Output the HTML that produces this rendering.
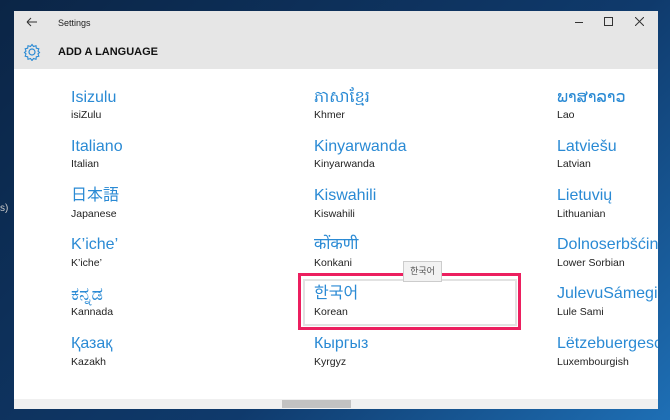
<!DOCTYPE html><html><head><meta charset="utf-8"><style>
body{margin:0;width:670px;height:420px;overflow:hidden;background:linear-gradient(135deg,#0b2546 0%,#0f3a6c 60%,#1e6fb5 100%);font-family:"Liberation Sans","Noto Sans CJK KR",sans-serif;position:relative}
.win{position:absolute;left:14px;top:11px;width:644px;height:398px;background:#fff;overflow:hidden}
.hd{position:absolute;left:0;top:0;width:644px;height:58px;background:#e6e6e6}
.t{position:absolute;font-size:9px;color:#222}
.n{position:absolute;font-size:16px;line-height:20px;height:20px;color:#2a8ad4;white-space:nowrap}
.e{position:absolute;font-size:10.5px;color:#222;white-space:nowrap}
</style></head><body>
<div style="position:absolute;left:0;top:203px;font-size:10px;color:#ccc">s)</div>
<div class="win">
<div class="hd">
<svg style="position:absolute;left:12px;top:6px" width="12" height="10"><path d="M1 5H11M1 5L5 1M1 5L5 9" stroke="#333" fill="none" stroke-width="1"/></svg>
<div class="t" style="left:44px;top:7px">Settings</div>
<div style="position:absolute;left:561px;top:11px;width:8px;border-top:1px solid #333"></div>
<div style="position:absolute;left:590px;top:6px;width:7px;height:7px;border:1px solid #333"></div>
<svg style="position:absolute;left:621px;top:6px" width="9" height="9"><path d="M0 0L9 9M9 0L0 9" stroke="#333"/></svg>
<svg style="position:absolute;left:9px;top:32px" width="18" height="18" viewBox="0 0 18 18"><circle cx="9" cy="9" r="3" fill="none" stroke="#2a8ad4" stroke-width="1.2"/><path d="M9 1.5L10.5 3.5L13 2.7L13.3 5.2L15.8 5.8L15 8.2L16.5 9.5L15 10.8L15.8 13.2L13.3 13.8L13 16.3L10.5 15.5L9 17.5L7.5 15.5L5 16.3L4.7 13.8L2.2 13.2L3 10.8L1.5 9.5L3 8.2L2.2 5.8L4.7 5.2L5 2.7L7.5 3.5Z" fill="none" stroke="#2a8ad4" stroke-width="1.1"/></svg>
<div style="position:absolute;left:44px;top:35px;font-size:11px;font-weight:bold;color:#111">ADD A LANGUAGE</div>
</div>
<div style="position:absolute;left:284px;top:262px;width:223px;height:57px;border:3px solid #ec1f5f;box-sizing:border-box"></div>
<div style="position:absolute;left:289px;top:268px;width:214px;height:47px;border:2px solid #e2e2e2;box-sizing:border-box"></div>
<div style="position:absolute;left:389px;top:250px;width:39px;height:21px;background:#f2f2f2;border:1px solid #ccc;box-sizing:border-box;font-size:9px;color:#555;text-align:center;line-height:19px">한국어</div>
<div class="n" style="left:57px;top:77px">Isizulu</div><div class="e" style="left:57px;top:98px">isiZulu</div>
<div class="n" style="left:57px;top:126px">Italiano</div><div class="e" style="left:57px;top:147px">Italian</div>
<div class="n" style="left:57px;top:175px">日本語</div><div class="e" style="left:57px;top:197px">Japanese</div>
<div class="n" style="left:57px;top:224px">K’iche’</div><div class="e" style="left:57px;top:246px">K’iche’</div>
<div class="n" style="left:57px;top:273px;font-size:18px">ಕನ್ನಡ</div><div class="e" style="left:57px;top:295px">Kannada</div>
<div class="n" style="left:57px;top:323px">Қазақ</div><div class="e" style="left:57px;top:345px">Kazakh</div>
<div class="n" style="left:300px;top:77px">ភាសាខ្មែរ</div><div class="e" style="left:300px;top:98px">Khmer</div>
<div class="n" style="left:300px;top:126px">Kinyarwanda</div><div class="e" style="left:300px;top:147px">Kinyarwanda</div>
<div class="n" style="left:300px;top:175px">Kiswahili</div><div class="e" style="left:300px;top:197px">Kiswahili</div>
<div class="n" style="left:300px;top:224px">कोंकणी</div><div class="e" style="left:300px;top:246px">Konkani</div>
<div class="n" style="left:300px;top:273px">한국어</div><div class="e" style="left:300px;top:295px">Korean</div>
<div class="n" style="left:300px;top:323px">Кыргыз</div><div class="e" style="left:300px;top:345px">Kyrgyz</div>
<div class="n" style="left:543px;top:77px">ພາສາລາວ</div><div class="e" style="left:543px;top:98px">Lao</div>
<div class="n" style="left:543px;top:126px">Latviešu</div><div class="e" style="left:543px;top:147px">Latvian</div>
<div class="n" style="left:543px;top:175px">Lietuvių</div><div class="e" style="left:543px;top:197px">Lithuanian</div>
<div class="n" style="left:543px;top:224px">Dolnoserbšćina</div><div class="e" style="left:543px;top:246px">Lower Sorbian</div>
<div class="n" style="left:543px;top:273px">JulevuSámegiella</div><div class="e" style="left:543px;top:295px">Lule Sami</div>
<div class="n" style="left:543px;top:323px">Lëtzebuergesch</div><div class="e" style="left:543px;top:345px">Luxembourgish</div>
<div style="position:absolute;left:0;top:388px;width:644px;height:10px;background:#f0f0f0"></div>
<div style="position:absolute;left:268px;top:389px;width:69px;height:8px;background:#c2c2c2"></div>
</div>
</body></html>
